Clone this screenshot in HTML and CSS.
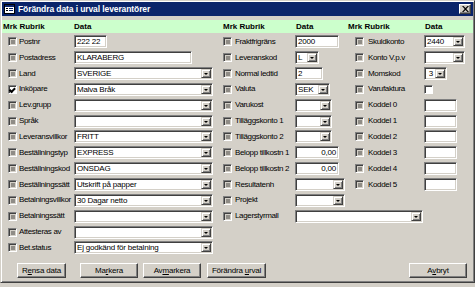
FILE: index.html
```html
<!DOCTYPE html>
<html lang="sv">
<head>
    <meta charset="UTF-8">
    <title>Förändra data i urval leverantörer</title>
    <link rel="stylesheet" href="styles.css">
</head>
<body>

<div class="window">
    <div class="titlebar">
        <svg class="app-icon" width="11" height="10" viewBox="0 0 11 10">
            <rect x="0.5" y="0.5" width="10" height="9" fill="#fff" stroke="#000"/>
            <rect x="1" y="1" width="9" height="2" fill="#0a246a"/>
            <rect x="2" y="4" width="2" height="1" fill="#000"/>
            <rect x="5" y="4" width="4" height="1" fill="#0a246a"/>
            <rect x="2" y="6" width="2" height="1" fill="#000"/>
            <rect x="5" y="6" width="4" height="1" fill="#0a246a"/>
        </svg>
        <span class="title">Förändra data i urval leverantörer</span>
        <span class="close">
            <svg width="7" height="6" viewBox="0 0 7 6">
                <path d="M0 0 L1.5 0 L3.5 2 L5.5 0 L7 0 L4.3 3 L7 6 L5.5 6 L3.5 4 L1.5 6 L0 6 L2.7 3 Z" fill="#000"/>
            </svg>
        </span>
    </div>

    <div class="heads">
        <span class="h-mrk1">Mrk Rubrik</span>
        <span class="h-data1">Data</span>
        <span class="h-mrk2">Mrk Rubrik</span>
        <span class="h-data2">Data</span>
        <span class="h-mrk3">Mrk Rubrik</span>
        <span class="h-data3">Data</span>
    </div>

    <div class="sheet">
        <!-- column 1 -->
        <div class="col col1">
            <span class="mark"></span><span class="label">Postnr</span>
            <span class="field w33"><span class="val">222 22</span></span>

            <span class="mark"></span><span class="label">Postadress</span>
            <span class="field w118"><span class="val">KLARABERG</span></span>

            <span class="mark"></span><span class="label">Land</span>
            <span class="field combo w139"><span class="val">SVERIGE</span><span class="arrow"></span></span>

            <span class="mark checked"></span><span class="label">Inköpare</span>
            <span class="field combo w139"><span class="val">Malva Bråk</span><span class="arrow"></span></span>

            <span class="mark"></span><span class="label">Lev.grupp</span>
            <span class="field combo w139"><span class="val"></span><span class="arrow"></span></span>

            <span class="mark"></span><span class="label">Språk</span>
            <span class="field combo w139"><span class="val"></span><span class="arrow"></span></span>

            <span class="mark"></span><span class="label">Leveransvillkor</span>
            <span class="field combo w139"><span class="val">FRITT</span><span class="arrow"></span></span>

            <span class="mark"></span><span class="label">Beställningstyp</span>
            <span class="field combo w139"><span class="val">EXPRESS</span><span class="arrow"></span></span>

            <span class="mark"></span><span class="label">Beställningskod</span>
            <span class="field combo w139"><span class="val">ONSDAG</span><span class="arrow"></span></span>

            <span class="mark"></span><span class="label">Beställningssätt</span>
            <span class="field combo w139"><span class="val">Utskrift på papper</span><span class="arrow"></span></span>

            <span class="mark"></span><span class="label">Betalningsvillkor</span>
            <span class="field combo w139"><span class="val">30 Dagar netto</span><span class="arrow"></span></span>

            <span class="mark"></span><span class="label">Betalningssätt</span>
            <span class="field combo w139"><span class="val"></span><span class="arrow"></span></span>

            <span class="mark"></span><span class="label">Attesteras av</span>
            <span class="field combo w139"><span class="val"></span><span class="arrow"></span></span>

            <span class="mark"></span><span class="label">Bet.status</span>
            <span class="field combo w139"><span class="val">Ej godkänd för betalning</span><span class="arrow"></span></span>
        </div>

        <!-- column 2 -->
        <div class="col col2">
            <span class="mark"></span><span class="label">Fraktfrigräns</span>
            <span class="field w44"><span class="val">2000</span></span>

            <span class="mark"></span><span class="label">Leveranskod</span>
            <span class="field combo w24"><span class="val">L</span><span class="arrow"></span></span>

            <span class="mark"></span><span class="label">Normal ledtid</span>
            <span class="field w28"><span class="val">2</span></span>

            <span class="mark"></span><span class="label">Valuta</span>
            <span class="field combo w35"><span class="val">SEK</span><span class="arrow"></span></span>

            <span class="mark"></span><span class="label">Varukost</span>
            <span class="field combo w37"><span class="val"></span><span class="arrow"></span></span>

            <span class="mark"></span><span class="label">Tilläggskonto 1</span>
            <span class="field combo w37"><span class="val"></span><span class="arrow"></span></span>

            <span class="mark"></span><span class="label">Tilläggskonto 2</span>
            <span class="field combo w37"><span class="val"></span><span class="arrow"></span></span>

            <span class="mark"></span><span class="label">Belopp tillkostn 1</span>
            <span class="field w44"><span class="val num">0,00</span></span>

            <span class="mark"></span><span class="label">Belopp tillkostn 2</span>
            <span class="field w44"><span class="val num">0,00</span></span>

            <span class="mark"></span><span class="label">Resultatenh</span>
            <span class="field combo w50"><span class="val"></span><span class="arrow"></span></span>

            <span class="mark"></span><span class="label">Projekt</span>
            <span class="field combo w50"><span class="val"></span><span class="arrow"></span></span>

            <span class="mark"></span><span class="label">Lagerstyrmall</span>
            <span class="field combo w128"><span class="val"></span><span class="arrow"></span></span>
        </div>

        <!-- column 3 -->
        <div class="col col3">
            <span class="mark"></span><span class="label">Skuldkonto</span>
            <span class="field combo w41"><span class="val">2440</span><span class="arrow"></span></span>

            <span class="mark"></span><span class="label">Konto V.p.v</span>
            <span class="field combo w41"><span class="val"></span><span class="arrow"></span></span>

            <span class="mark"></span><span class="label">Momskod</span>
            <span class="field combo w23"><span class="val num">3</span><span class="arrow"></span></span>

            <span class="mark"></span><span class="label">Varufaktura</span>
            <span class="tick"></span>

            <span class="mark"></span><span class="label">Koddel 0</span>
            <span class="field w33"><span class="val"></span></span>

            <span class="mark"></span><span class="label">Koddel 1</span>
            <span class="field w33"><span class="val"></span></span>

            <span class="mark"></span><span class="label">Koddel 2</span>
            <span class="field w33"><span class="val"></span></span>

            <span class="mark"></span><span class="label">Koddel 3</span>
            <span class="field w33"><span class="val"></span></span>

            <span class="mark"></span><span class="label">Koddel 4</span>
            <span class="field w33"><span class="val"></span></span>

            <span class="mark"></span><span class="label">Koddel 5</span>
            <span class="field w33"><span class="val"></span></span>
        </div>
    </div>

    <div class="buttons">
        <button class="btn b-rensa">R<u>e</u>nsa data</button>
        <button class="btn b-markera">Ma<u>r</u>kera</button>
        <button class="btn b-avmark">Av<u>m</u>arkera</button>
        <button class="btn b-urval">Förändra <u>u</u>rval</button>
        <button class="btn b-avbryt">A<u>v</u>bryt</button>
    </div>
</div>

</body>
</html>
```

FILE: styles.css
```css
body {
    margin: 0;
    padding: 0;
    background-color: #d4d0c8;
    font-family: "Liberation Sans", Arial, sans-serif;
    font-size: 8px;
    color: #000;
}

.window {
    box-sizing: border-box;
    width: 475px;
    height: 283px;
    padding: 1px;
    background-color: #d4d0c8;
    border: 1px solid;
    border-color: #d4d0c8 #404040 #404040 #d4d0c8;
    box-shadow: inset 1px 1px #fff, inset -1px -1px #808080;
    display: flex;
    flex-direction: column;
}

/* title bar */
.titlebar {
    height: 14px;
    background-color: #0a246a;
    display: flex;
    align-items: center;
    padding-left: 2px;
}

.app-icon {
    display: block;
}

.title {
    margin-left: 3px;
    color: #fff;
    font-weight: bold;
    font-size: 8.5px;
    letter-spacing: -0.1px;
}

.close {
    margin-left: auto;
    margin-right: 2px;
    width: 12px;
    height: 10px;
    box-sizing: border-box;
    background-color: #d4d0c8;
    border: 1px solid;
    border-color: #fff #404040 #404040 #fff;
    box-shadow: inset -1px -1px #808080;
    display: flex;
    align-items: center;
    justify-content: center;
}

.close svg {
    display: block;
}

/* green header */
.heads {
    margin-top: 4px;
    height: 13px;
    background-color: #ccffcc;
    display: grid;
    grid-template-columns: 71px 149px 73px 52px 77px 1fr;
    align-items: center;
    padding-left: 1px;
    font-weight: bold;
    font-size: 8px;
}

/* data sheet */
.sheet {
    margin-top: 1px;
    padding-left: 6px;
    display: flex;
}

.col {
    display: grid;
    grid-auto-rows: 15.85px;
    align-items: center;
}

.col1 {
    grid-template-columns: 11px 55px 149px;
}

.col2 {
    grid-template-columns: 12px 60px 60px;
}

.col3 {
    grid-template-columns: 13px 56px 46px;
}

.label {
    font-size: 8px;
    letter-spacing: -0.35px;
    white-space: nowrap;
    line-height: 10px;
}

.mark {
    width: 9px;
    height: 9px;
    box-sizing: border-box;
    border: 1px solid;
    border-color: #808080 #fff #fff #808080;
    box-shadow: inset 1px 1px #404040;
    background-color: #d4d0c8;
    position: relative;
}

.mark::after {
    content: "";
    position: absolute;
    left: 2px;
    top: 2px;
    width: 4px;
    height: 4px;
    background-color: #8f8c86;
}

.mark.checked {
    background-color: #fff;
}

.mark.checked::after {
    left: 1px;
    top: 1px;
    width: 6px;
    height: 5px;
    background: none;
    border-left: 2px solid #000;
    border-bottom: 2px solid #000;
    width: 4px;
    height: 2px;
    transform: rotate(-45deg) translate(-1px, 0);
}

.tick {
    width: 9px;
    height: 9px;
    box-sizing: border-box;
    border: 1px solid;
    border-color: #808080 #fff #fff #808080;
    box-shadow: inset 1px 1px #404040;
    background-color: #fff;
}

.field {
    box-sizing: border-box;
    height: 13px;
    background-color: #fff;
    border: 1px solid;
    border-color: #808080 #fff #fff #808080;
    box-shadow: inset 1px 1px #404040, inset -1px -1px #d4d0c8;
    display: flex;
    align-items: stretch;
    overflow: hidden;
}

.val {
    flex: 1;
    padding: 1px 1px 0 2px;
    font-size: 8px;
    line-height: 10px;
    letter-spacing: -0.2px;
    white-space: nowrap;
    overflow: hidden;
}

.val.num {
    text-align: right;
    padding-right: 2px;
}

.arrow {
    width: 10px;
    margin: 1px 1px 1px 0;
    box-sizing: border-box;
    background-color: #d4d0c8;
    border: 1px solid;
    border-color: #d4d0c8 #404040 #404040 #d4d0c8;
    box-shadow: inset 1px 1px #fff, inset -1px -1px #808080;
    position: relative;
}

.arrow::after {
    content: "";
    position: absolute;
    left: 2px;
    top: 3px;
    border-left: 2px solid transparent;
    border-right: 2px solid transparent;
    border-top: 2px solid #000;
}

.w23 { width: 23px; }
.w24 { width: 24px; }
.w28 { width: 28px; }
.w33 { width: 33px; }
.w35 { width: 35px; }
.w37 { width: 37px; }
.w41 { width: 41px; }
.w44 { width: 44px; }
.w50 { width: 50px; }
.w118 { width: 118px; }
.w128 { width: 128px; }
.w139 { width: 139px; }

/* buttons */
.buttons {
    margin-top: 7px;
    padding-left: 15px;
    display: flex;
}

.btn {
    height: 15px;
    padding: 0;
    font-family: "Liberation Sans", Arial, sans-serif;
    font-size: 8px;
    letter-spacing: -0.2px;
    color: #000;
    background-color: #d4d0c8;
    border: 1px solid;
    border-color: #fff #404040 #404040 #fff;
    box-shadow: inset -1px -1px #808080;
    cursor: pointer;
}

.b-rensa { width: 49px; }
.b-markera { width: 58px; margin-left: 14px; }
.b-avmark { width: 58px; margin-left: 5px; }
.b-urval { width: 59px; margin-left: 6px; }
.b-avbryt { width: 58px; margin-left: auto; margin-right: 6px; }
```
